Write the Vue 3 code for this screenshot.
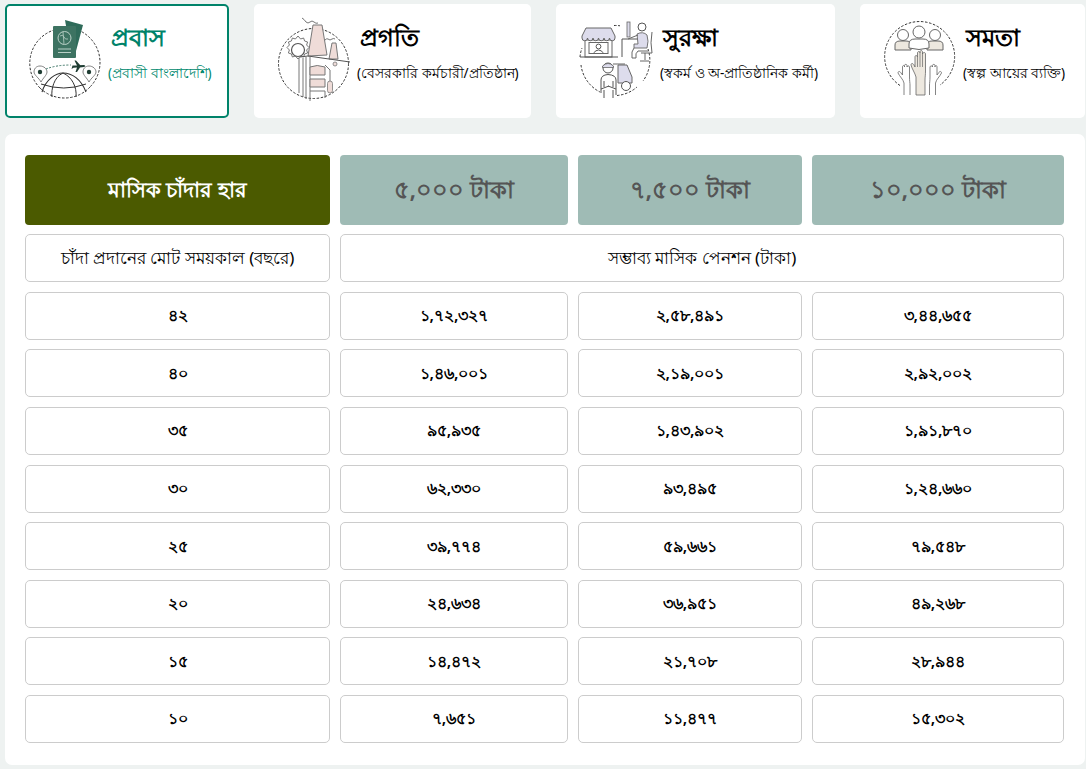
<script setup>
const amounts = ['৫,০০০ টাকা', '৭,৫০০ টাকা', '১০,০০০ টাকা']
const rows = [
  ['৪২', '১,৭২,৩২৭', '২,৫৮,৪৯১', '৩,৪৪,৬৫৫'],
  ['৪০', '১,৪৬,০০১', '২,১৯,০০১', '২,৯২,০০২'],
  ['৩৫', '৯৫,৯৩৫', '১,৪৩,৯০২', '১,৯১,৮৭০'],
  ['৩০', '৬২,৩৩০', '৯৩,৪৯৫', '১,২৪,৬৬০'],
  ['২৫', '৩৯,৭৭৪', '৫৯,৬৬১', '৭৯,৫৪৮'],
  ['২০', '২৪,৬৩৪', '৩৬,৯৫১', '৪৯,২৬৮'],
  ['১৫', '১৪,৪৭২', '২১,৭০৮', '২৮,৯৪৪'],
  ['১০', '৭,৬৫১', '১১,৪৭৭', '১৫,৩০২'],
]
</script>

<template>
  <div class="page">
    <div class="cards">
      <div class="card active c1">
        <svg class="ico" viewBox="0 0 90 90" width="90" height="90" fill="none">
          <path d="M58 15 A35 35 0 0 1 70 72 M20 73 A35 35 0 0 1 34 15 M20 73 A35 35 0 0 0 70 72" stroke="#333" stroke-width="1" stroke-dasharray="2.5 1.6"/>
          <path d="M45 5 L63 10 L56 36 L50 34 Z" fill="#2f6b5a"/>
          <rect x="33" y="11" width="23" height="32" rx="1" fill="#3d7362"/>
          <circle cx="44.5" cy="23" r="6.5" stroke="#b9d0c7" stroke-width="1"/>
          <path d="M40 21 q3 -2 4 1 t4 2 M43 17 l1 12" stroke="#b9d0c7" stroke-width=".8"/>
          <path d="M38 34 H51 M38 37.5 H51" stroke="#b9d0c7" stroke-width="1"/>
          <path d="M20 51 c-4 0 -6 3 -6 6 c0 3 5 6 7 10 c2 -4 6 -7 6 -10 c0 -3 -3 -6 -7 -6 Z M69 51 c-4 0 -6 3 -6 6 c0 3 4 6 6 10 c2 -4 7 -7 7 -10 c0 -3 -3 -6 -7 -6 Z" stroke="#666" stroke-width=".8" fill="#fff"/>
          <circle cx="20" cy="57" r="2.2" fill="#1f3d33"/>
          <circle cx="69" cy="57" r="2.2" fill="#1f3d33"/>
          <path d="M26 54 Q36 50 51 50" stroke="#2f6b5a" stroke-width=".9" stroke-dasharray="2 1.5"/>
          <path d="M52.5 50.5 L64 50 Q66.5 51 64 52 L60 52.4 L57 57 H55.5 L57 52.6 L53.5 52.8 L51.5 54 L52.2 51.5 Z M57 50.6 L54.5 45.5 H56 L60.5 50.4 Z" fill="#1f3d33"/>
          <path d="M22 77 C26 64 36 58 43 58 C52 58 61 64 66 77" stroke="#333" stroke-width="1.1"/>
          <path d="M43 58 C34 62 31 74 32 82 M43 58 C52 62 57 72 56 82 M21 69 Q44 77 66 69" stroke="#333" stroke-width="1"/>
        </svg>
        <div class="txt">
          <div class="ttl">প্রবাস</div>
          <div class="sub">(প্রবাসী বাংলাদেশি)</div>
        </div>
      </div>

      <div class="card c2">
        <svg class="ico" viewBox="0 0 90 90" width="90" height="90" fill="none">
          <circle cx="43.5" cy="48.5" r="35" stroke="#333" stroke-width="1" stroke-dasharray="2.5 1.6"/>
          <path d="M43 10 H52 L57 40 L38 41 Z" fill="#efdcd8" stroke="#777" stroke-width="1"/>
          <path d="M62 28 H66 L68 44 L59 44 Z" fill="#efdcd8" stroke="#777" stroke-width="1"/>
          <g transform="translate(-5 2)">
            <path d="M33 19 l2.6 3 l3 -1 l1 3 l3 1 l-1 3 l2.4 2.5 l-2.4 2.5 l1 3 l-3 1 l-1 3 l-3 -1 l-2.6 3 l-2.6 -3 l-3 1 l-1 -3 l-3 -1 l1 -3 l-2.4 -2.5 l2.4 -2.5 l-1 -3 l3 -1 l1 -3 l3 1 Z" fill="#fff" stroke="#777" stroke-width="1"/>
            <circle cx="33" cy="33" r="6.5" fill="#fff" stroke="#555" stroke-width="1.2"/>
          </g>
          <path d="M30 42 L38 41 L80 47" stroke="#555" stroke-width="1"/>
          <path d="M29 43 V78 M33 43 V82 M36 42 V84 M40 42 V86" stroke="#777" stroke-width="1"/>
          <path d="M40 52 Q47 49 55 52 V60 H40 Z M40 64 H55 V72 H40 Z" fill="#efdcd8" stroke="#777" stroke-width="1"/>
          <path d="M40 76 H55 V83 M55 50 L60 55 V66" stroke="#777" stroke-width="1"/>
          <circle cx="65" cy="49" r="2" fill="#efdcd8" stroke="#777" stroke-width=".8"/>
          <rect x="57.5" y="66" width="5" height="12" rx="2.5" fill="#efdcd8" stroke="#777" stroke-width=".8"/>
          <path d="M32 3 q2 1 4 4 q2 2 4 0 q2 -2 4 0 q2 2 4 1 M55 25 q2 -2 3 -1 q2 2 4 0 q2 -1 3 0" stroke="#666" stroke-width=".9"/>
        </svg>
        <div class="txt">
          <div class="ttl">প্রগতি</div>
          <div class="sub">(বেসরকারি কর্মচারী/প্রতিষ্ঠান)</div>
        </div>
      </div>

      <div class="card c3">
        <svg class="ico" viewBox="0 0 90 90" width="90" height="90" fill="none">
          <path d="M39 10.5 A35 35 0 0 1 45 10.8 M73 34 A35 35 0 0 1 68 66 M5 42 A35 35 0 0 1 7 33 M6 50 A35 35 0 0 0 25 77 M42 80.5 A35 35 0 0 0 62 72" stroke="#333" stroke-width="1" stroke-dasharray="2.5 1.6"/>
          <rect x="10" y="25" width="27" height="17" fill="#fff" stroke="#666" stroke-width="1"/>
          <path d="M11 13 H36 L40 21 V23 a2.75 2.75 0 0 1 -5.5 0 a2.75 2.75 0 0 1 -5.5 0 a2.75 2.75 0 0 1 -5.5 0 a2.75 2.75 0 0 1 -5.5 0 a2.75 2.75 0 0 1 -5.5 0 a2.75 2.75 0 0 1 -5.5 0 V21 Z" fill="#dddcec" stroke="#666" stroke-width="1"/>
          <rect x="14" y="27.5" width="19" height="11" fill="#fff" stroke="#666" stroke-width="1"/>
          <circle cx="23.5" cy="31.5" r="2.4" stroke="#555"/>
          <path d="M18.5 38 q5 -6 10 0" stroke="#555"/>
          <path d="M5 42 H43" stroke="#555"/>
          <rect x="52" y="7" width="3" height="15" fill="#dddcec" stroke="#666" stroke-width=".8"/>
          <path d="M47 24 H64 M47 24 V42" stroke="#555"/>
          <circle cx="67" cy="12" r="4" stroke="#555"/>
          <path d="M62 19 Q68 16 72 20 Q74 26 72 33 H59 V29 H63 Z" fill="#dddcec" stroke="#666" stroke-width=".9"/>
          <path d="M63 20 L53 24 M59 33 Q56 36 57 43 H61 Q60 38 63 36 H73 M77 17 Q75 28 77 38 H66 M70 38 V45 M65 46 H74" stroke="#666"/>
          <path d="M38 49 H50" stroke="#666"/>
          <path d="M43 50 H52 L57 62 V68 H43 Z" fill="#dddcec" stroke="#666"/>
          <circle cx="51" cy="71" r="4.5" fill="#fff" stroke="#555"/>
          <circle cx="33" cy="53" r="5" fill="#fff" stroke="#555"/>
          <path d="M27.5 51 q5.5 -5 11 0 v1.5 h-11 Z" fill="#dddcec" stroke="#555" stroke-width=".7"/>
          <path d="M26 78 V65 Q26 60 33 59.5 Q41 60 41 65 V80 M26 74 L34 71 M41 74 L33 71 M29 66 V72 M38 66 V72 M29 75 V83 M38 75 V83" stroke="#555" fill="none"/>
        </svg>
        <div class="txt">
          <div class="ttl">সুরক্ষা</div>
          <div class="sub">(স্বকর্ম ও অ-প্রাতিষ্ঠানিক কর্মী)</div>
        </div>
      </div>

      <div class="card c4">
        <svg class="ico" viewBox="0 0 90 90" width="90" height="90" fill="none">
          <path d="M22 70.5 A35 35 0 1 1 62 70" stroke="#333" stroke-width="1" stroke-dasharray="2.5 1.6"/>
          <circle cx="25" cy="20" r="5.5" fill="#fff" stroke="#666"/>
          <circle cx="57" cy="20" r="5.5" fill="#fff" stroke="#666"/>
          <path d="M17 35 V30 Q17 26 22 26 H28 Q33 26 33 30 V35 Z M49 35 V30 Q49 26 54 26 H60 Q65 26 65 30 V35 Z" fill="#ede8df" stroke="#666"/>
          <circle cx="41" cy="17" r="6" fill="#fff" stroke="#666"/>
          <path d="M31 33 V29 Q31 24 37 24 H45 Q51 24 51 29 V33 Q41 36 31 33 Z" fill="#fff" stroke="#666"/>
          <path d="M38 80 V62 C37 58 34 54 33 50 C33 48 35 48 36 50 L37 52 V42 C37 40 39 40 39.5 42 V38 C39.5 36 42 36 42 38 V37 C42 35 44.5 35 44.5 37 V39 C45 37 47.5 37 47.5 39 V56 C47.5 60 47 62 47 65 V80 Z" fill="#ede8df" stroke="#666" stroke-width=".8"/>
          <path d="M39.5 42 V52 M42 38 V52 M44.5 38 V52" stroke="#666" stroke-width=".7"/>
          <path d="M26 80 V68 C25 64 22 62 20 58 C20 56 22 56 23 58 L24.5 60 V52 C24.5 50 26.5 50 26.5 52 V50.5 C26.5 49 29 49 29 50.5 V52 C29 50.5 31.5 50.5 31.5 52 V62 C31.5 66 32 68 32 70 V80" fill="#fff" stroke="#666" stroke-width=".8"/>
          <g transform="translate(83.5 0) scale(-1 1)">
            <path d="M26 80 V68 C25 64 22 62 20 58 C20 56 22 56 23 58 L24.5 60 V52 C24.5 50 26.5 50 26.5 52 V50.5 C26.5 49 29 49 29 50.5 V52 C29 50.5 31.5 50.5 31.5 52 V62 C31.5 66 32 68 32 70 V80" fill="#fff" stroke="#666" stroke-width=".8"/>
          </g>
        </svg>
        <div class="txt">
          <div class="ttl">সমতা</div>
          <div class="sub">(স্বল্প আয়ের ব্যক্তি)</div>
        </div>
      </div>
    </div>

    <div class="panel">
      <div class="table">
        <div class="cell head-main">মাসিক চাঁদার হার</div>
        <div v-for="a in amounts" :key="a" class="cell head-amt">{{ a }}</div>
        <div class="cell bordered label">চাঁদা প্রদানের মোট সময়কাল (বছরে)</div>
        <div class="cell bordered span3 label">সম্ভাব্য মাসিক পেনশন (টাকা)</div>
        <template v-for="r in rows" :key="r[0]">
          <div v-for="(v, i) in r" :key="i" class="cell bordered num">{{ v }}</div>
        </template>
      </div>
    </div>
  </div>
</template>

<style>
body { background: #eef2f1; }
</style>

<style scoped>
.page {
  width: 1086px;
  height: 769px;
  box-sizing: border-box;
  padding: 4px 1px 0 5px;
  font-family: "Noto Sans", "Liberation Sans", sans-serif;
  overflow: hidden;
}
.cards { display: flex; gap: 25px; height: 114px; }
.card {
  background: #fff;
  border-radius: 5px;
  box-sizing: border-box;
  display: flex;
  align-items: flex-start;
}
.c1 { width: 224px; padding: 11px 0 0 15px; }
.c2 { width: 277px; padding: 11px 0 0 16px; }
.c3 { width: 279px; padding: 11px 0 0 19px; }
.c4 { width: 225px; padding: 11px 0 0 18px; }
.active { border: 2px solid #00836a; padding-left: 13px; padding-top: 9px; }
.ico { flex: none; }
.txt { display: flex; flex-direction: column; align-items: flex-start; margin-top: 6px; white-space: nowrap; }
.c1 .txt { margin-left: -2px; }
.c2 .txt { margin-left: -3px; }
.c3 .txt { margin-left: -5px; }
.c4 .txt { margin-left: -5px; }
.ttl { font-size: 24px; line-height: 32px; font-weight: 600; color: #000; margin-left: 3px; }
.sub { font-size: 13.5px; line-height: 20px; margin-top: 10px; color: #000; }
.active .ttl { color: #00836a; }
.active .sub { color: #00896e; }
.panel {
  margin-top: 16px;
  background: #fff;
  border-radius: 7px;
  height: 631px;
  box-sizing: border-box;
  padding: 21px 21px 0 20px;
}
.table {
  display: grid;
  grid-template-columns: 305px 228px 224px 252px;
  grid-template-rows: 69.6px repeat(9, 48px);
  column-gap: 10px;
  row-gap: 9.6px;
}
.cell {
  display: flex;
  align-items: center;
  justify-content: center;
  box-sizing: border-box;
  border-radius: 4px;
  color: #000;
}
.head-main { background: #4b5a00; color: #fff; font-size: 21px; font-weight: 600; padding-top: 3px; }
.head-amt { background: #9fbbb5; color: #555; font-size: 24px; font-weight: 600; padding-top: 3px; }
.bordered { border: 1px solid #ccc; border-radius: 5px; }
.label { font-size: 17px; padding-top: 1px; }
.num { font-size: 16px; font-weight: 600; padding-top: 2px; }
.span3 { grid-column: span 3; }
</style>
